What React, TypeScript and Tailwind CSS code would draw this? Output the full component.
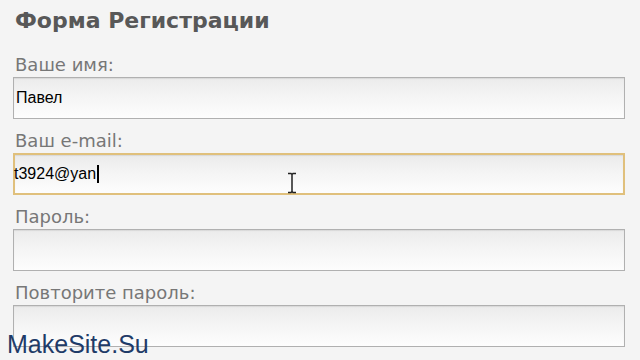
const labelCls =
  "block pl-[15px] mb-[1px] text-[18px] leading-[22px] text-[#777777] font-['DejaVu_Sans',Verdana,sans-serif]";
const inputCls =
  "w-[612px] h-[42px] ml-[13px] border border-[#b0b0b0] bg-linear-to-b from-[#ebebeb] via-[#f5f5f5] to-[#fdfdfd] shadow-[inset_0_1px_1px_rgba(0,0,0,0.08)] flex items-center text-[16px] text-black font-['Liberation_Sans',Arial,sans-serif]";

function Field({ label, children, active }: { label: string; children?: React.ReactNode; active?: boolean }) {
  return (
    <div className="flex flex-col">
      <div className="h-[34px] flex flex-col justify-end">
        <span className={labelCls}>{label}</span>
      </div>
      <div
        className={
          active
            ? `${inputCls} border-2 border-[#e0c07c] shadow-[0_0_2px_rgba(226,194,126,0.7)]`
            : inputCls
        }
      >
        {children}
      </div>
    </div>
  );
}

export default function App() {
  return (
    <div className="w-[640px] h-[360px] bg-[#f4f4f4] overflow-hidden relative">
      <div className="h-[43px] pl-[15px] pt-[7px]">
        <h1 className="text-[22px] leading-[28px] font-bold text-[#585858] font-['DejaVu_Sans',Verdana,sans-serif]">
          Форма Регистрации
        </h1>
      </div>
      <Field label="Ваше имя:">
        <span className="pl-[2px]">Павел</span>
      </Field>
      <Field label="Ваш e-mail:" active>
        <span className="-ml-[1px] flex items-center">
          t3924@yan
          <span className="inline-block w-[2px] h-[18px] bg-black ml-[1px]" />
        </span>
        <svg className="ml-[188px] mt-[18px]" width="10" height="22" viewBox="0 0 10 22">
          <path d="M1 1.5h3l1 1 1-1h3M5 2.5v17M1 20.5h3l1-1 1 1h3" fill="none" stroke="#222" strokeWidth="1.5" />
        </svg>
      </Field>
      <Field label="Пароль:" />
      <Field label="Повторите пароль:" />
      <div className="absolute left-[7px] top-[329px] text-[25px] leading-[30px] text-[#1f3b68] font-['Liberation_Sans',Arial,sans-serif]">
        MakeSite.Su
      </div>
    </div>
  );
}
